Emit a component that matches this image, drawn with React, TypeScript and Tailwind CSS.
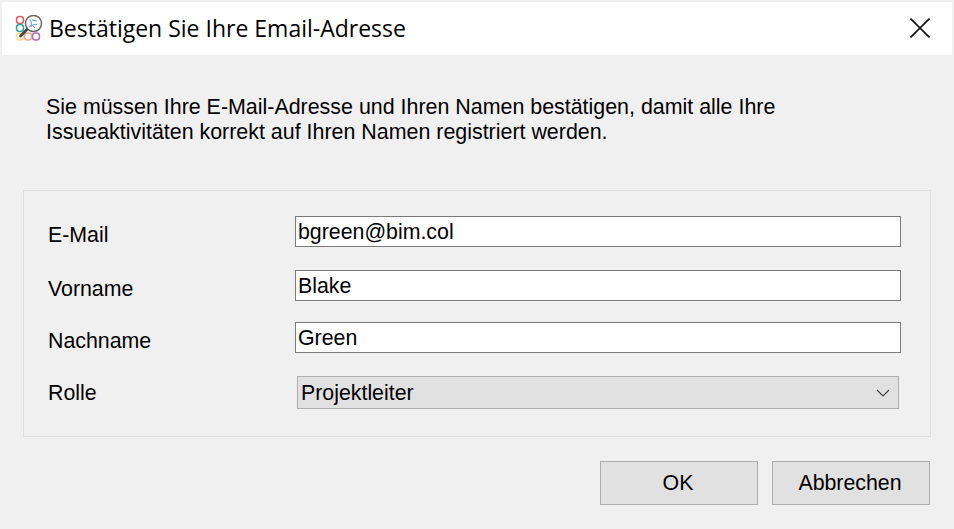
const arial = "font-['Liberation_Sans',Arial,sans-serif]";

// App logo: ring of coloured cells with a magnifier on top
function Logo() {
    const cells: [number, number, string][] = [
        [1.5, 1.5, '#e8565f'],
        [1.5, 9.5, '#2fa59a'],
        [1.5, 18, '#f3d98b'],
        [9.5, 18, '#f0a98c'],
        [17.5, 18, '#a66fc4'],
    ];
    return (
        <svg width="28" height="28" viewBox="0 0 28 28" fill="none">
            {cells.map(([x, y, c], i) => (
                <rect key={i} x={x} y={y} width="7" height="7" rx="3" stroke={c} strokeWidth="1.5" />
            ))}
            <circle cx="18.5" cy="8.5" r="8" fill="#fff" stroke="#666" strokeWidth="1.5" />
            <path d="M15 4.5c1.5 2 2 4 1 7M16 11.5c2-2 4-2.5 6-2M17 5l5 1" stroke="#5aa5e0" strokeWidth="1.1" />
            <path d="M14 12l3-2 3 3" stroke="#c08ae0" strokeWidth="1" />
            <path d="M12 14.5l-6.5 6.5" stroke="#444" strokeWidth="2.6" strokeLinecap="round" />
        </svg>
    );
}

function Field({ label, value, className }: { label: string; value: string; className: string }) {
    return (
        <div className={`flex items-start h-[31px] ${className}`}>
            <label className="w-[247px] pt-[7px] text-[21.33px] leading-[25px] text-black">{label}</label>
            <div className="w-[606px] h-[31px] border border-[#7a7a7a] bg-white pl-[2px] text-[21.33px] leading-[30px] text-black">
                {value}
            </div>
        </div>
    );
}

export default function App() {
    return (
        <div className={`w-[954px] h-[529px] bg-[#f0f0f0] flex flex-col overflow-hidden ${arial}`}>
            {/* Title bar */}
            <div className="h-[53px] mt-[2px] mx-[2px] bg-white flex items-center pl-[13px] pr-[22px]">
                <Logo />
                <span className="ml-[6px] font-['Open_Sans',sans-serif] text-[23px] text-black">
                    Bestätigen Sie Ihre Email-Adresse
                </span>
                <svg className="ml-auto mb-[2px]" width="20" height="20" viewBox="0 0 20 20" stroke="#111" strokeWidth="1.6">
                    <path d="M0.5 0.5l19 19M19.5 0.5l-19 19" />
                </svg>
            </div>

            {/* Message */}
            <p className="mt-[40px] mb-[-1px] ml-[46px] text-[21.42px] leading-[25px] text-black">
                Sie müssen Ihre E-Mail-Adresse und Ihren Namen bestätigen, damit alle Ihre
                <br />
                Issueaktivitäten korrekt auf Ihren Namen registriert werden.
            </p>

            {/* Form */}
            <div className="mt-[46px] ml-[23px] w-[908px] h-[247px] border border-[#dfdfdf] pt-[25px] pl-[24px]">
                <Field label="E-Mail" value="bgreen@bim.col" className="" />
                <Field label="Vorname" value="Blake" className="mt-[23px]" />
                <Field label="Nachname" value="Green" className="mt-[21px]" />
                <div className="flex items-center h-[33px] mt-[23px]">
                    <label className="w-[249px] pt-[2px] text-[21.33px] leading-[25px] text-black">Rolle</label>
                    <div className="w-[602px] h-[33px] border border-[#adadad] bg-[#e1e1e1] pl-[3px] pr-[8px] flex items-center justify-between text-[21.33px] text-black">
                        <span className="pt-[2px]">Projektleiter</span>
                        <svg width="14" height="8" viewBox="0 0 14 8" fill="none" stroke="#444" strokeWidth="1.2">
                            <path d="M1 1l6 6 6-6" />
                        </svg>
                    </div>
                </div>
            </div>

            {/* Buttons */}
            <div className="mt-[24px] ml-[600px] flex gap-[14px]">
                <button className="w-[158px] h-[44px] border border-[#adadad] bg-[#e1e1e1] pt-[1px] pr-[2px] text-[21.33px] text-black">OK</button>
                <button className="w-[158px] h-[44px] border border-[#adadad] bg-[#e1e1e1] pt-[1px] pr-[2px] text-[21.33px] text-black">Abbrechen</button>
            </div>
        </div>
    );
}
